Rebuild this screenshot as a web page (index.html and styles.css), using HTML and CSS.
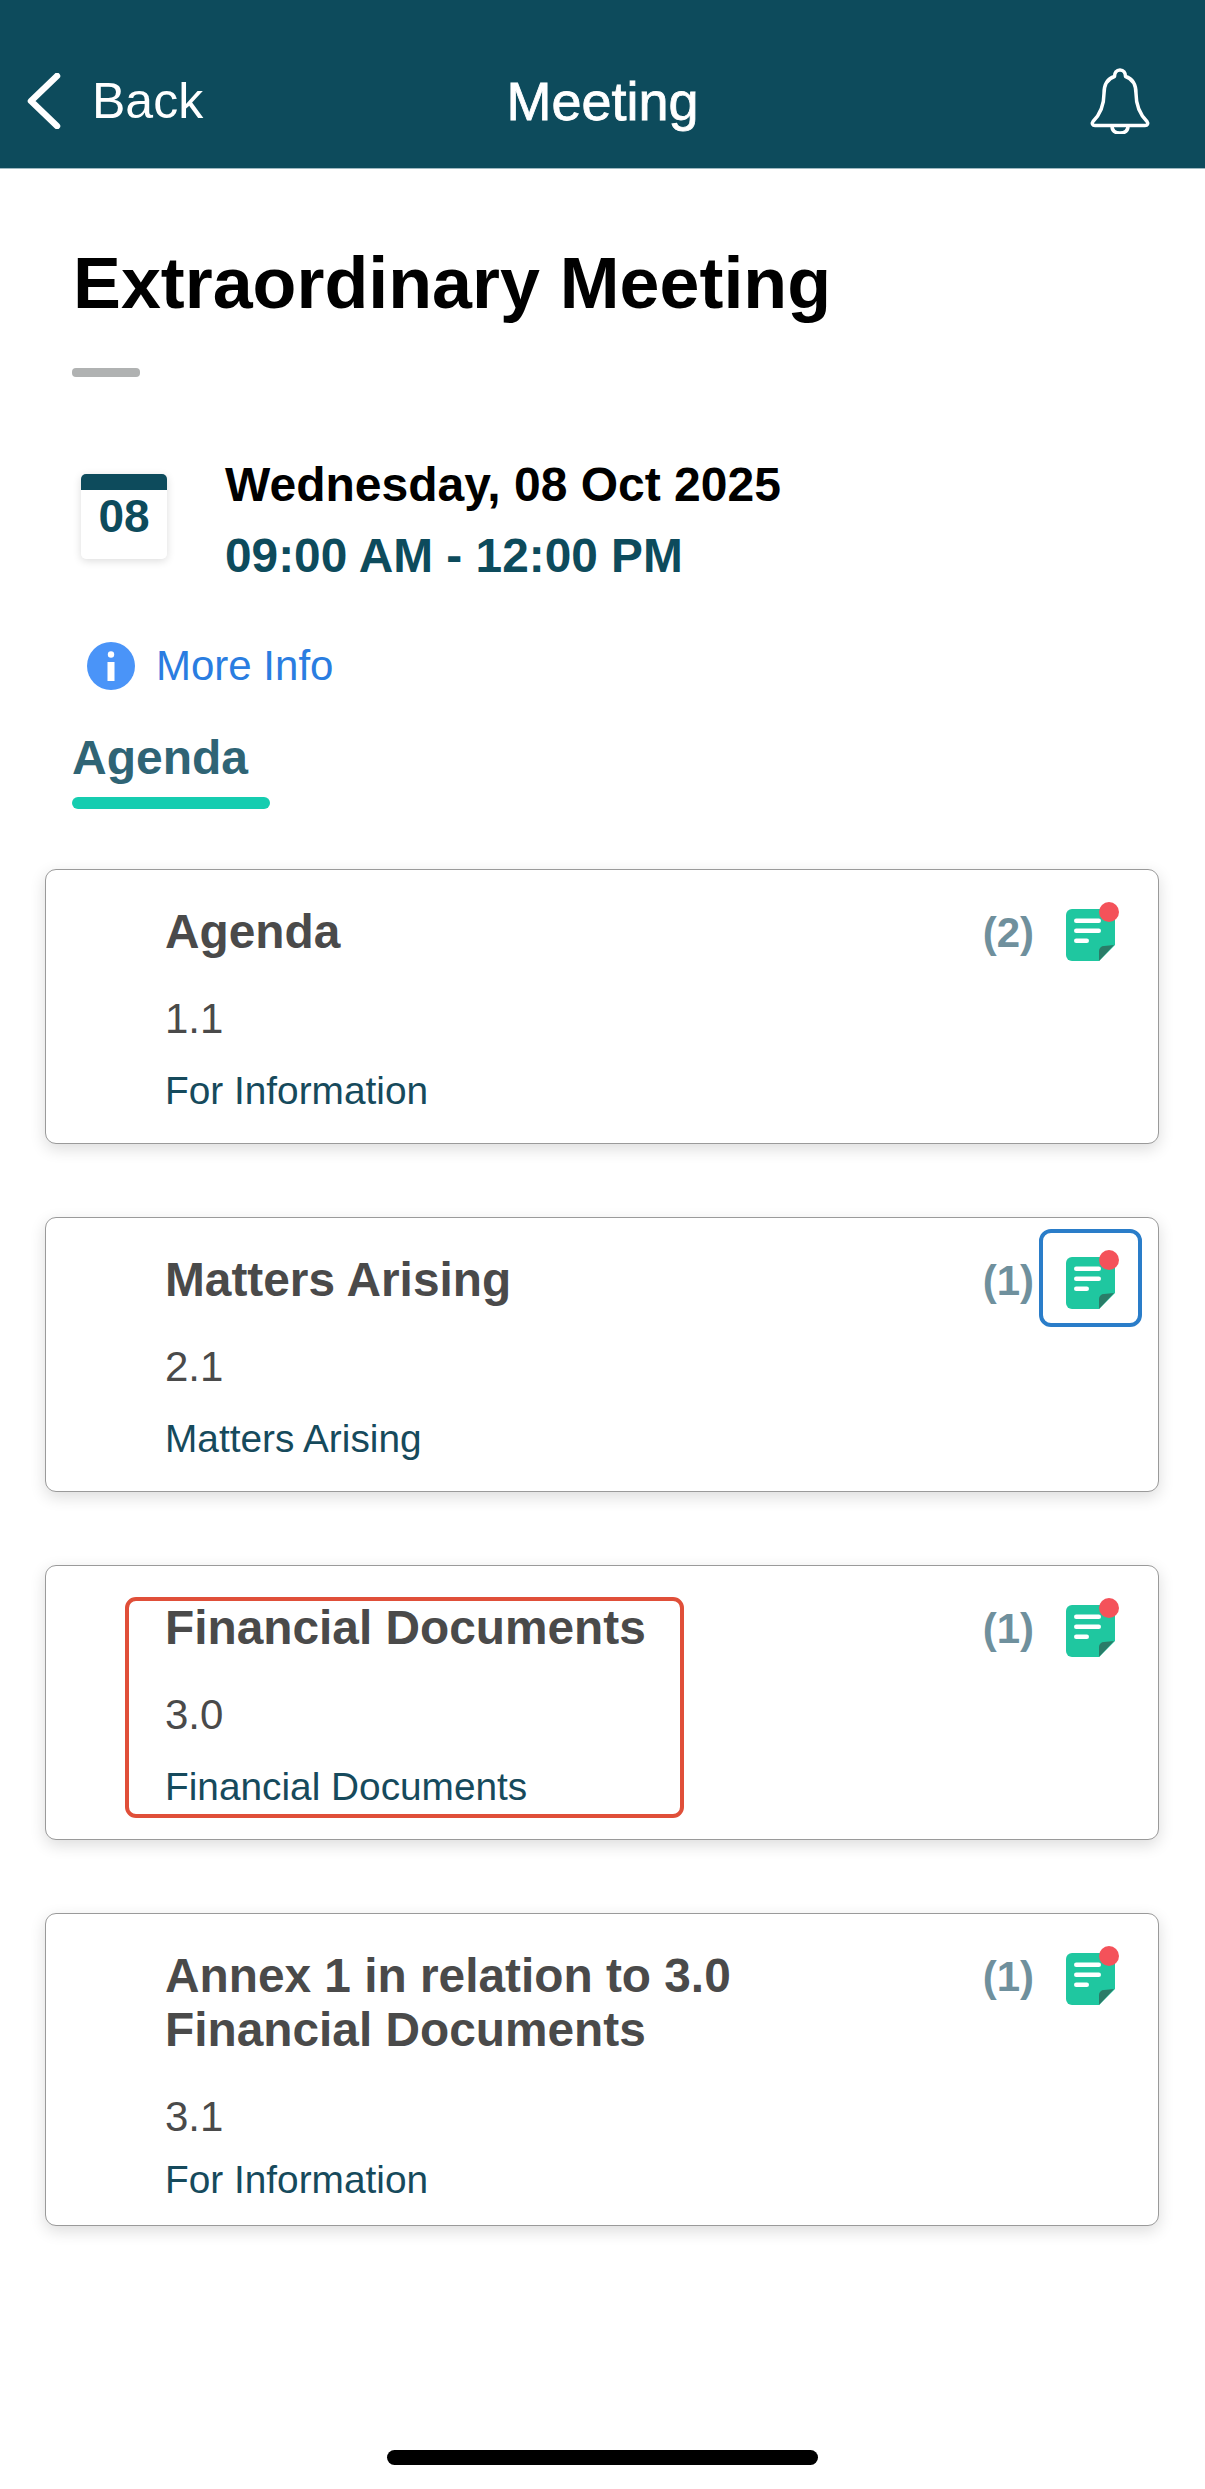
FILE: index.html
```html
<!DOCTYPE html>
<html lang="en">
<head>
<meta charset="utf-8">
<title>Meeting</title>
<link rel="stylesheet" href="styles.css">
</head>
<body>
<div class="page">
  <header class="topbar">
    <div class="back">
      <svg class="chevron" viewBox="0 0 34 56"><path d="M30 3 L4 28 L30 53" fill="none" stroke="#fff" stroke-width="6.500" stroke-linecap="round" stroke-linejoin="round"/></svg>
      <span>Back</span>
    </div>
    <div class="title">Meeting</div>
    <div class="bell-wrap">
      <svg class="bell" viewBox="0 0 62 66"><path d="M31 2c3.600 0 5.500 3 5.500 6.500 8 2.500 10.500 9 10.500 17 0 12 3 20 11 28 1.500 2 .5 4-2 4H6c-2.500 0-3.500-2-2-4 8-8 11-16 11-28 0-8 2.500-14.500 10.500-17C25.500 5 27.400 2 31 2z" fill="none" stroke="#fff" stroke-width="3.500" stroke-linejoin="round"/><path d="M23 58c0 5 3.500 7 8 7s8-2 8-7" fill="none" stroke="#fff" stroke-width="3.500"/></svg>
    </div>
  </header>

  <main class="content">
    <h1 class="heading">Extraordinary Meeting</h1>
    <div class="rule"></div>

    <section class="when">
      <div class="cal">
        <div class="cal-top"></div>
        <div class="cal-day">08</div>
      </div>
      <div class="when-text">
        <div class="date">Wednesday, 08 Oct 2025</div>
        <div class="time">09:00 AM - 12:00 PM</div>
      </div>
    </section>

    <div class="more">
      <svg class="info" viewBox="0 0 48 48"><circle cx="24" cy="24" r="24" fill="#4a94f8"/><circle cx="24" cy="12.500" r="3.200" fill="#fff"/><rect x="20.500" y="20" width="7" height="19" fill="#fff"/></svg>
      <span>More Info</span>
    </div>

    <div class="tab">
      <div class="tab-label">Agenda</div>
      <div class="tab-line"></div>
    </div>

    <div class="cards">
      <article class="card">
        <div class="card-body">
          <div class="card-title">Agenda</div>
          <div class="card-num">1.1</div>
          <div class="card-sub">For Information</div>
        </div>
        <div class="count">(2)</div>
        <svg class="doc" viewBox="0 0 54 62"><use href="#doc-icon"/></svg>
      </article>

      <article class="card">
        <div class="card-body">
          <div class="card-title">Matters Arising</div>
          <div class="card-num">2.1</div>
          <div class="card-sub">Matters Arising</div>
        </div>
        <div class="count">(1)</div>
        <svg class="doc" viewBox="0 0 54 62"><use href="#doc-icon"/></svg>
        <div class="mark-blue"></div>
      </article>

      <article class="card">
        <div class="card-body">
          <div class="card-title">Financial Documents</div>
          <div class="card-num">3.0</div>
          <div class="card-sub">Financial Documents</div>
        </div>
        <div class="count">(1)</div>
        <svg class="doc" viewBox="0 0 54 62"><use href="#doc-icon"/></svg>
        <div class="mark-red"></div>
      </article>

      <article class="card card-tall">
        <div class="card-body">
          <div class="card-title">Annex 1 in relation to 3.0<br>Financial Documents</div>
          <div class="card-num">3.1</div>
          <div class="card-sub">For Information</div>
        </div>
        <div class="count">(1)</div>
        <svg class="doc" viewBox="0 0 54 62"><use href="#doc-icon"/></svg>
      </article>
    </div>
  </main>

  <div class="home-bar"></div>
</div>

<svg class="defs" width="0" height="0">
  <defs>
    <g id="doc-icon">
      <path d="M7 9h37a6 6 0 0 1 6 6v30L34 61H7a6 6 0 0 1-6-6V15a6 6 0 0 1 6-6z" fill="#1fc7a0"/>
      <path d="M34 61V51a5 5 0 0 1 5-5l10-1z" fill="#2a7c68"/>
      <rect x="9" y="18.500" width="27" height="4.500" rx="2.200" fill="#fff"/>
      <rect x="9" y="28.500" width="27" height="4.500" rx="2.200" fill="#fff"/>
      <rect x="9" y="38.500" width="15" height="4.500" rx="2.200" fill="#fff"/>
      <circle cx="44" cy="12" r="10" fill="#f4525a"/>
    </g>
  </defs>
</svg>
</body>
</html>
```

FILE: styles.css
```css
* { box-sizing: border-box; }

html, body {
  margin: 0;
  padding: 0;
  background: #fff;
}

body {
  font-family: "Liberation Sans", Arial, sans-serif;
}

.page {
  position: relative;
  width: 1205px;
  height: 2489px;
  overflow: hidden;
  background: #fff;
}

/* Top bar */
.topbar {
  display: grid;
  grid-template-columns: 1fr auto 1fr;
  align-items: center;
  height: 169px;
  padding: 34px 27px 0;
  background: #0d4b5c;
  border-bottom: 1px solid #9fb9c2;
  color: #fff;
}

.back {
  display: flex;
  align-items: center;
  gap: 31px;
  font-size: 50px;
}

.chevron {
  width: 34px;
  height: 56px;
}

.title {
  font-size: 54px;
  font-weight: 400;
  -webkit-text-stroke: 0.8px #fff;
}

.bell-wrap {
  display: flex;
  justify-content: flex-end;
  padding-right: 27px;
}

.bell {
  width: 62px;
  height: 66px;
}

/* Content */
.content {
  padding: 74px 45px 0;
}

.heading {
  margin: 0;
  padding-left: 28px;
  font-size: 71.800px;
  line-height: 80px;
  font-weight: 700;
  color: #000;
}

.rule {
  width: 68px;
  height: 9px;
  margin: 45px 0 0 27px;
  border-radius: 4px;
  background: #b0b2b2;
}

.when {
  display: flex;
  align-items: flex-start;
  margin: 82px 0 0 36px;
  gap: 58px;
}

.cal {
  width: 86px;
  height: 85px;
  margin-top: 15px;
  border-radius: 5px;
  background: #fff;
  box-shadow: 0 2px 8px rgba(0, 0, 0, 0.14);
  overflow: hidden;
}

.cal-top {
  height: 16px;
  background: #0d4b5c;
}

.cal-day {
  text-align: center;
  font-size: 46px;
  line-height: 52px;
  font-weight: 700;
  color: #0d4b5c;
}

.when-text {
  display: flex;
  flex-direction: column;
  gap: 19px;
}

.date {
  font-size: 48px;
  line-height: 52px;
  font-weight: 700;
  color: #000;
}

.time {
  font-size: 47.800px;
  line-height: 52px;
  font-weight: 700;
  color: #0d4b5c;
}

.more {
  display: flex;
  align-items: center;
  gap: 21px;
  margin: 60px 0 0 42px;
  font-size: 42px;
  line-height: 48px;
  color: #2a7de1;
}

.info {
  width: 48px;
  height: 48px;
}

.tab {
  margin: 40px 0 0 27px;
}

.tab-label {
  font-size: 48px;
  line-height: 56px;
  font-weight: 700;
  color: #2f6475;
}

.tab-line {
  width: 198px;
  height: 12px;
  margin-top: 11px;
  border-radius: 6px;
  background: #15cdb0;
}

/* Agenda cards */
.cards {
  display: flex;
  flex-direction: column;
  gap: 73px;
  margin-top: 60px;
}

.card {
  position: relative;
  display: flex;
  align-items: flex-start;
  width: 1114px;
  min-height: 275px;
  padding: 35px 39px 0 119px;
  background: #fff;
  border: 1px solid #9a9a9a;
  border-radius: 11px;
  box-shadow: 0 5px 16px rgba(0, 0, 0, 0.14);
}

.card-body {
  flex: 1;
}

.card-title {
  font-size: 47.800px;
  line-height: 54px;
  font-weight: 700;
  color: #4a4a4a;
}

.card-num {
  margin-top: 35px;
  font-size: 42px;
  line-height: 50px;
  color: #4a4a4a;
}

.card-sub {
  margin-top: 24px;
  font-size: 38.800px;
  line-height: 46px;
  color: #164a5c;
}

.card-tall {
  min-height: 313px;
}

.card-tall .card-sub {
  margin-top: 15px;
}

.count {
  margin-top: 1px;
  font-size: 42px;
  line-height: 54px;
  font-weight: 700;
  color: #6f909d;
}

.doc {
  width: 54px;
  height: 62px;
  margin: -5px 0 0 31px;
}

.mark-blue {
  position: absolute;
  left: 993px;
  top: 11px;
  width: 103px;
  height: 98px;
  border: 4px solid #2a7dc9;
  border-radius: 12px;
}

.mark-red {
  position: absolute;
  left: 79px;
  top: 31px;
  width: 559px;
  height: 221px;
  border: 4px solid #e04f39;
  border-radius: 11px;
}

.home-bar {
  position: absolute;
  left: 387px;
  top: 2450px;
  width: 431px;
  height: 15px;
  border-radius: 8px;
  background: #000;
}

.defs {
  position: absolute;
}
```
